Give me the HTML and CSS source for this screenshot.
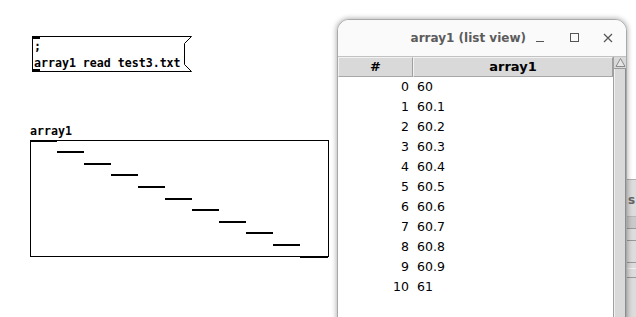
FILE: index.html
```html
<!DOCTYPE html>
<html>
<head>
<meta charset="utf-8">
<link rel="stylesheet" href="styles.css">
</head>
<body>
<div class="canvas">
  <div class="msg">
    <svg class="msg-shape" width="161" height="37" viewBox="0 0 161 37">
      <polygon points="0.5,0.5 159.5,0.5 152.5,7.5 152.5,28.5 159.5,35.5 0.5,35.5" fill="#fff" stroke="#000" stroke-width="1"/>
    </svg>
    <span class="inlet"></span>
    <span class="outlet"></span>
    <div class="msg-text">;
array1 read test3.txt</div>
  </div>

  <div class="garray">
    <div class="garray-label">array1</div>
    <svg class="graph" width="299" height="118" viewBox="0 0 299 118">
      <rect x="0.5" y="0.5" width="298" height="116" fill="#fff" stroke="#000" stroke-width="1"/>
      <rect x="0" y="0" width="27" height="2" fill="#000"/>
      <rect x="27" y="11" width="27" height="2" fill="#000"/>
      <rect x="54" y="23" width="27" height="2" fill="#000"/>
      <rect x="81" y="34" width="27" height="2" fill="#000"/>
      <rect x="108" y="46" width="27" height="2" fill="#000"/>
      <rect x="135" y="58" width="27" height="2" fill="#000"/>
      <rect x="162" y="69" width="27" height="2" fill="#000"/>
      <rect x="189" y="81" width="27" height="2" fill="#000"/>
      <rect x="216" y="92" width="27" height="2" fill="#000"/>
      <rect x="243" y="104" width="27" height="2" fill="#000"/>
      <rect x="270" y="116" width="28" height="2" fill="#000"/>
    </svg>
  </div>
</div>

<div class="bgwin">
  <div class="bg-s">s</div>
  <div class="bg-band"></div>
  <div class="bg-line l1"></div>
  <div class="bg-line l2"></div>
  <div class="bg-line l3"></div>
  <div class="bg-line l4"></div>
</div>

<div class="window">
  <div class="titlebar">
    <span class="title">array1 (list view)</span>
    <div class="controls">
      <span class="ctl min"><svg width="12" height="12" viewBox="0 0 12 12"><line x1="2" y1="9.5" x2="10" y2="9.5" stroke="#555" stroke-width="1"/></svg></span>
      <span class="ctl max"><svg width="12" height="12" viewBox="0 0 12 12"><rect x="1.5" y="1.5" width="8" height="8" fill="none" stroke="#555" stroke-width="1"/></svg></span>
      <span class="ctl"><svg width="12" height="12" viewBox="0 0 12 12"><path d="M2 2 L10 10 M10 2 L2 10" stroke="#555" stroke-width="1.2"/></svg></span>
    </div>
  </div>
  <div class="body">
    <div class="table">
      <div class="thead">
        <div class="th idx">#</div>
        <div class="th val">array1</div>
      </div>
      <div class="rows">
        <div class="row"><span class="ri">0</span><span class="rv">60</span></div>
        <div class="row"><span class="ri">1</span><span class="rv">60.1</span></div>
        <div class="row"><span class="ri">2</span><span class="rv">60.2</span></div>
        <div class="row"><span class="ri">3</span><span class="rv">60.3</span></div>
        <div class="row"><span class="ri">4</span><span class="rv">60.4</span></div>
        <div class="row"><span class="ri">5</span><span class="rv">60.5</span></div>
        <div class="row"><span class="ri">6</span><span class="rv">60.6</span></div>
        <div class="row"><span class="ri">7</span><span class="rv">60.7</span></div>
        <div class="row"><span class="ri">8</span><span class="rv">60.8</span></div>
        <div class="row"><span class="ri">9</span><span class="rv">60.9</span></div>
        <div class="row"><span class="ri">10</span><span class="rv">61</span></div>
      </div>
    </div>
    <div class="scroll">
      <div class="arrow"><svg width="11" height="11" viewBox="0 0 11 11"><polygon points="5.5,1.5 10,9.5 1,9.5" fill="#e6e6e6" stroke="#8a8a8a" stroke-width="1"/></svg></div>
      <div class="slider"></div>
    </div>
  </div>
</div>
</body>
</html>
```

FILE: styles.css
```css
html, body {
  margin: 0;
  padding: 0;
}
body {
  width: 636px;
  height: 317px;
  overflow: hidden;
  position: relative;
  background: #fff;
  font-family: "DejaVu Sans", sans-serif;
  color: #000;
}

/* Pd canvas objects (free canvas) */
.msg {
  position: absolute;
  left: 32px;
  top: 36px;
  width: 160px;
  height: 36px;
}
.msg-shape {
  position: absolute;
  left: 0;
  top: 0;
}
.inlet, .outlet {
  position: absolute;
  left: 0;
  width: 8px;
  height: 3px;
  background: #000;
}
.inlet { top: 0; }
.outlet { bottom: 0; }
.msg-text {
  position: relative;
  padding: 2px 0 0 2px;
  font: bold 11.6px/17px "DejaVu Sans Mono", monospace;
  white-space: pre;
}

.garray {
  position: absolute;
  left: 30px;
  top: 124px;
}
.garray-label {
  font: bold 11.6px/14px "DejaVu Sans Mono", monospace;
}
.graph {
  display: block;
  margin-top: 2px;
}

/* window behind, on the right */
.bgwin {
  position: absolute;
  left: 627px;
  top: 179px;
  width: 9px;
  height: 138px;
  background: #dcdcdc;
  border-top: 1px solid #b0b0b0;
  overflow: hidden;
}
.bg-s {
  font: bold 12px/14px "DejaVu Sans", sans-serif;
  color: #666;
  margin-top: 13px;
  padding-left: 1px;
}
.bg-band {
  margin-top: 9px;
  height: 11px;
  background: #c9c9c9;
  border-top: 1px solid #b8b8b8;
  border-bottom: 1px solid #9a9a9a;
}
.bg-line {
  height: 1px;
  background: #9a9a9a;
}
.l1 { margin-top: 11px; }
.l2 { margin-top: 21px; }
.l3 { margin-top: 5px; background: #f0f0f0; }
.l4 { margin-top: 8px; }

/* list view window */
.window {
  position: absolute;
  left: 337px;
  top: 19px;
  width: 288px;
  height: 310px;
  border: 1px solid #a9a9a9;
  border-radius: 12px 12px 0 0;
  background: #fafafa;
  box-shadow: 0 0 5px 1px rgba(0, 0, 0, 0.28);
  display: flex;
  flex-direction: column;
  overflow: hidden;
}
.titlebar {
  height: 36px;
  flex: none;
  display: flex;
  align-items: center;
  justify-content: flex-end;
  padding-right: 12px;
  border-bottom: 1px solid #c2c2c2;
  background: #fafafa;
}
.title {
  font: bold 12px/16px "DejaVu Sans", sans-serif;
  color: #5c5c5c;
  margin-right: 8px;
}
.controls {
  display: flex;
}
.ctl {
  width: 12px;
  height: 12px;
  display: flex;
}
.ctl.min { margin-right: 23px; }
.ctl.max { margin-right: 21px; }
.body {
  flex: 1;
  display: flex;
  background: #fff;
}
.table {
  width: 275px;
  display: flex;
  flex-direction: column;
}
.thead {
  display: flex;
  height: 20px;
  background: #d9d9d9;
}
.th {
  box-sizing: border-box;
  height: 20px;
  border-top: 1px solid #f2f2f2;
  border-left: 1px solid #f2f2f2;
  border-right: 1px solid #9e9e9e;
  border-bottom: 1px solid #a8a8a8;
  text-align: center;
  font: bold 13px/18px "DejaVu Sans", sans-serif;
}
.th.idx { width: 75px; }
.th.val { flex: 1; }
.rows {
  flex: 1;
}
.row {
  display: flex;
  height: 20px;
  font: 12.5px/20px "DejaVu Sans", sans-serif;
}
.ri {
  box-sizing: border-box;
  width: 75px;
  padding-right: 4px;
  text-align: right;
}
.rv {
  padding-left: 4px;
}
.scroll {
  width: 12px;
  flex: none;
  background: #d9d9d9;
  border-left: 1px solid #a0a0a0;
  display: flex;
  flex-direction: column;
}
.arrow {
  height: 11px;
  display: flex;
  justify-content: center;
  border-bottom: 1px solid #9a9a9a;
}
.slider {
  flex: 1;
  border-right: 1px solid #8c8c8c;
  border-left: 1px solid #f0f0f0;
  background: #d9d9d9;
}
```
